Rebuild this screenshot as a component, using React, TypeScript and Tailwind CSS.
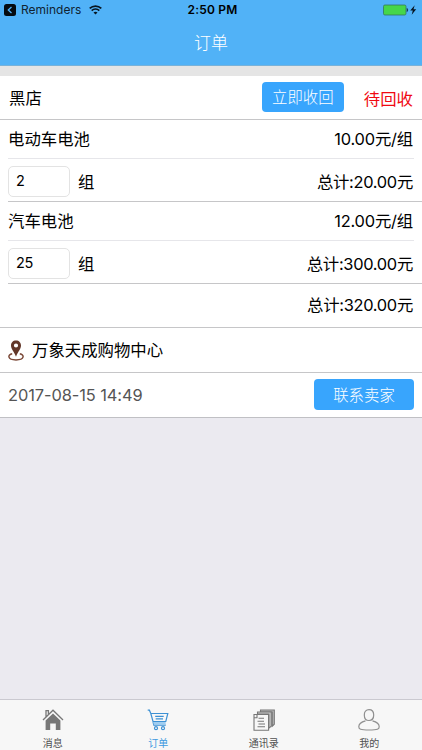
import type { ReactNode } from 'react';

function Battery({ name, price, count, total }: { name: string; price: string; count: string; total: string }) {
  return (
    <section className="ml-2">
      <div className="mr-2 flex h-[39px] items-center justify-between border-b border-[#e6e6ea] pr-px">
        <span>{name}</span>
        <span className="tracking-[-0.2px]">{price}</span>
      </div>
      <div className="flex h-[43px] items-center border-b border-[#c6c6c8] pr-[9px] pt-[3px]">
        <input
          className="h-[31px] w-[62px] rounded-[5px] border border-[#e3e3e3] bg-white px-[7px] pb-0.5 text-[14.5px] tracking-[-0.3px] outline-none"
          defaultValue={count}
        />
        <span className="ml-2">组</span>
        <span className="ml-auto tracking-[-0.3px]">{total}</span>
      </div>
    </section>
  );
}

function Tab({ label, active, children }: { label: string; active?: boolean; children: ReactNode }) {
  return (
    <button className={`flex flex-1 flex-col items-center pt-[9px] ${active ? 'text-[#3d9ae0]' : 'text-[#505050]'}`}>
      <svg width="22" height="22" viewBox="0 0 22 22" fill="none">{children}</svg>
      <span className="mt-[5px] text-[10px] leading-[14px]">{label}</span>
    </button>
  );
}

export default function App() {
  return (
    <div className="flex h-[750px] w-[422px] flex-col overflow-hidden bg-[#ebeaf0] font-['Inter','Noto_Sans_CJK_SC',sans-serif] text-[16.4px] leading-6 text-black">
      <header className="h-[66px] shrink-0 border-b border-[#79b2d9] bg-[#51b2f7]">
        <div className="grid h-5 grid-cols-3 items-center">
          <div className="flex items-center pl-1 text-[12px] leading-5">
            <svg width="12" height="12" viewBox="0 0 12 12"><rect width="12" height="12" rx="2.5" fill="#050b10" /><path d="M7.5 3 4.3 6l3.2 3" fill="none" stroke="#51b2f7" strokeWidth="1.3" /></svg>
            <span className="ml-[5px] text-[#102331]">Reminders</span>
            <svg className="ml-2" width="13" height="10" viewBox="0 0 13 10" fill="none" stroke="#071521" strokeWidth="1.7"><path d="M.7 3.4c3.3-3.1 8.3-3.1 11.6 0M2.7 5.7c2.2-2 5.4-2 7.6 0" /><path d="m4.5 7.4 2 2.1 2-2.1c-1.2-1-2.8-1-4 0Z" fill="#071521" stroke="none" /></svg>
          </div>
          <span className="pl-[3px] text-center text-[12px] font-semibold leading-5 tracking-[0.2px]">2:50 PM</span>
          <div className="flex items-center justify-end pr-[5px]">
            <svg width="34" height="12" viewBox="0 0 34 12"><rect x=".5" y="1" width="22.5" height="10" rx="1.4" fill="#45d64a" stroke="#35765a" strokeWidth=".8" /><path d="M23.7 4c1.9.4 1.9 3.6 0 4Z" fill="#173e59" /><path d="m31.7 1.2-4.5 5.4h2.6l-1.1 4.2 4.5-5.5h-2.7Z" fill="#071521" /></svg>
          </div>
        </div>
        <h1 className="pt-px text-center text-[17px] font-light leading-[45px] text-white">订单</h1>
      </header>
      <div className="h-[10px] shrink-0 bg-[#e5e5e5]" />
      <main className="bg-white">
        <div className="flex h-11 items-center border-b border-[#c6c6c8] pl-[9px] pr-[9px]">
          <span>黑店</span>
          <button className="mb-px ml-auto h-[30px] w-[82px] rounded-[4px] bg-[#38a5fd] pt-0.5 text-[15.4px] font-light leading-[28px] text-white">立即收回</button>
          <span className="ml-5 pt-0.5 text-[#f00912]">待回收</span>
        </div>
        <Battery name="电动车电池" price="10.00元/组" count="2" total="总计:20.00元" />
        <Battery name="汽车电池" price="12.00元/组" count="25" total="总计:300.00元" />
        <div className="flex h-11 items-center justify-end border-b border-[#c6c6c8] pb-0.5 pr-[9px] tracking-[-0.3px]">总计:320.00元</div>
        <div className="flex h-[45px] items-center border-b border-[#c6c6c8] pl-2">
          <svg width="16" height="21" viewBox="0 0 16 21" fill="none"><path d="M4.2 13.7C-.5 14.6-.9 19.9 8 19.9s8.5-5.3 3.8-6.2" stroke="#7c4a39" strokeWidth="1.5" /><path fillRule="evenodd" d="M8 .5c-3.1 0-5 2.1-5 5C3 9.3 6 11.2 8 16.7c2-5.5 5-7.4 5-11.2 0-2.9-1.9-5-5-5Zm0 2.9a2.1 2.1 0 1 1 0 4.2 2.1 2.1 0 0 1 0-4.2Z" fill="#623729" /></svg>
          <span className="ml-2">万象天成购物中心</span>
        </div>
        <div className="flex h-[45px] items-center justify-between border-b border-[#c0c0c4] pl-2 pr-2">
          <time className="tracking-[-0.08px] text-[#555]">2017-08-15 14:49</time>
          <button className="mb-0.5 h-[31px] w-[100px] rounded-[4px] bg-[#38a5fd] pt-0.5 text-[15.4px] font-light leading-[29px] text-white">联系卖家</button>
        </div>
      </main>
      <nav className="mt-auto flex h-[51px] shrink-0 border-t border-[#cac9d0] bg-[#f7f7f7]">
        <Tab label="消息">
          <path d="M4 8V1.7h2.4v4.1M1 11 11 1.2 21 11" stroke="#777" strokeWidth="1.3" /><path d="m3.6 11.4 7.4-7 7.4 7V21h-4.6v-6.5H8.2V21H3.6Z" fill="#777" />
        </Tab>
        <Tab label="订单" active>
          <g stroke="#3d91d4" strokeWidth="1.2"><path d="M.7 1.2h1.7l1.4 3.3h17l-2 8H6L3.8 4.5M6 12.5l.8 3.7h12M8.2 7.3h8.5M8.7 9.8h7.3" /><circle cx="9" cy="19.2" r="1.5" /><circle cx="16" cy="19.2" r="1.5" /><path d="M6.2 13h12.5v2.8H6.8Z" fill="#9fcdf0" stroke="none" /></g>
        </Tab>
        <Tab label="通讯录">
          <g stroke="#777" strokeWidth="1.1"><path d="M7.5 3V1h13.8v14.2l-2 2V3Z" fill="#bbb" /><path d="M4.5 5V3h13.8v14.2l-2.5 2V5Z" fill="#ccc" /><path d="M1 5.5h14.6v15.8H1Z" fill="#f7f7f7" /><path d="M1 8.8h3V5.5M5.5 9.2H11M4.5 12.2H11M5.5 15H12M4.5 17.7H12" /></g>
        </Tab>
        <Tab label="我的">
          <path d="M11 .7c-3 0-4.7 2.2-4.7 5.2 0 3.2 1.8 5.6 4.7 5.6s4.7-2.4 4.7-5.6c0-3-1.7-5.2-4.7-5.2ZM7.5 11.9c-4.3 1.1-6.7 2.7-6.7 5.9 0 2.4 1.4 3.2 10.2 3.2s10.2-.8 10.2-3.2c0-3.2-2.4-4.8-6.7-5.9" stroke="#909090" strokeWidth="1.2" />
        </Tab>
      </nav>
    </div>
  );
}
